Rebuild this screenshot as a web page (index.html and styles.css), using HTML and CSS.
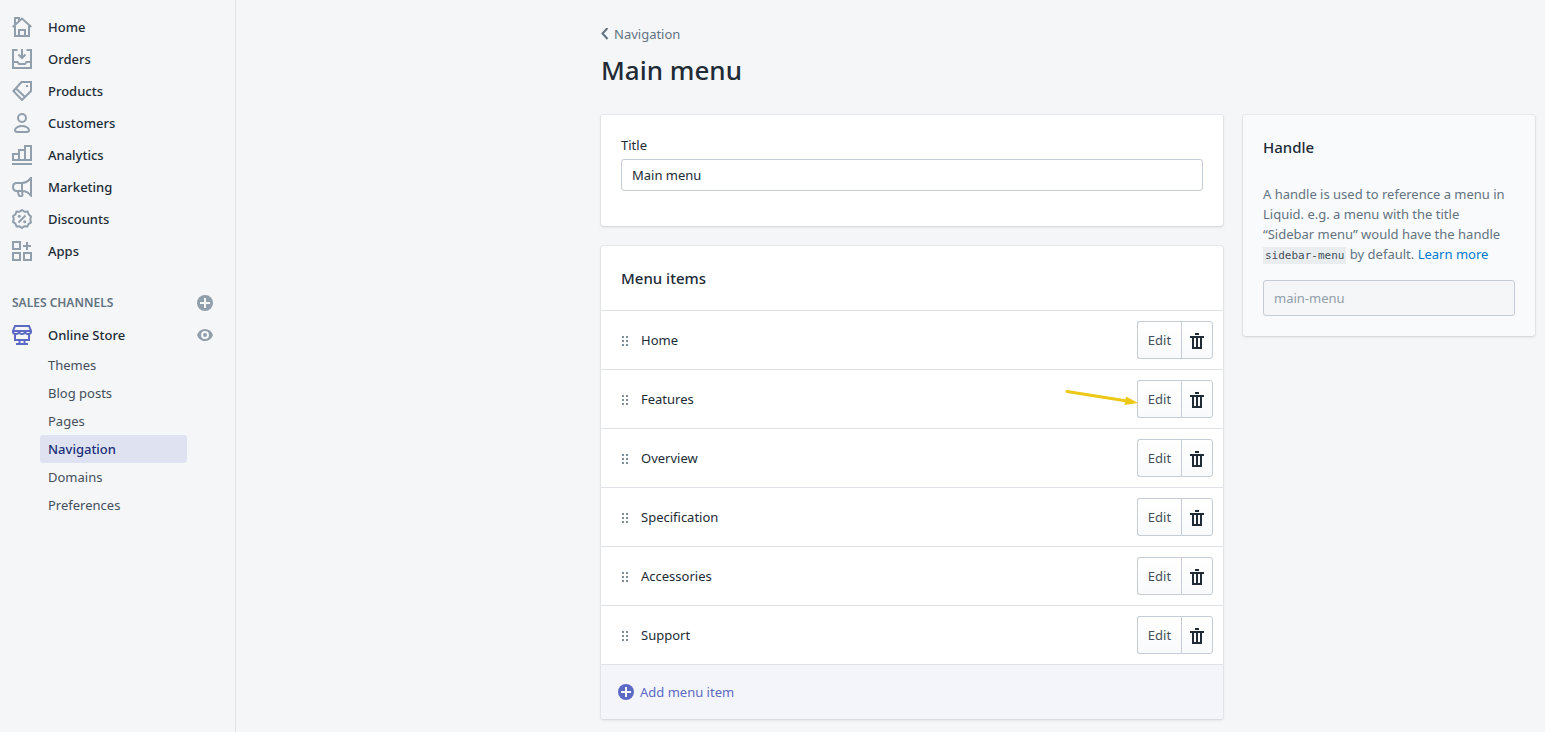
FILE: index.html
```html
<!DOCTYPE html>
<html lang="en">
<head>
<meta charset="utf-8">
<title>Main menu</title>
<link rel="stylesheet" href="styles.css">
</head>
<body>
<svg class="sprite" aria-hidden="true">
  <symbol id="i-home" viewBox="0 0 20 20"><path d="M3 9v10h14V9M7 19v-6h6v6M.7 10 10 1.500l9.300 8.500M3 8V1h4v3"/></symbol>
  <symbol id="i-orders" viewBox="0 0 20 20"><path d="M5.500 1H1v18h18V1h-4.500M1 13h4.500l1.500 2h6l1.500-2H19M10 0v9M6.500 5.500 10 9l3.500-3.500"/></symbol>
  <symbol id="i-products" viewBox="0 0 20 20"><path d="M9.500 1H19v9l-9 9-8.600-9zM4 7.500l9 8.500"/><path class="solid" d="M14 4h2v2h-2z"/></symbol>
  <symbol id="i-customers" viewBox="0 0 20 20"><circle cx="10" cy="5" r="4"/><path d="M5.500 19h9q2.500 0 2.500-2c0-2.500-4-4-7-4s-7 1.500-7 4q0 2 2.500 2z"/></symbol>
  <symbol id="i-analytics" viewBox="0 0 20 20"><path d="M1 15V9h6v6zM7 15V5h6v10zM13 15V1h6v14zM0 19h20"/></symbol>
  <symbol id="i-marketing" viewBox="0 0 20 20"><path d="M19 0v18.500c-2.500-3-5-4.500-9-4.500H5C2.500 14 1 12.500 1 10S2.500 6 5 6h5c4 0 6.500-2 9-5zM10 6v8M5.500 14 7 18.500q.5.800 1.800.8t1.700-1.300L10 14"/></symbol>
  <symbol id="i-discounts" viewBox="0 0 20 20"><path d="M10 1 12.600 2.800 15.600 2.600 16.700 5.500 19 7.500 18.300 10.500 19 13.500 16.700 14.800 15.300 17.400 12.300 17.300 10 19 7.500 17.300 4.600 17.400 3.400 14.700 1 13 1.800 10 1 7.200 3.400 5.300 4.500 2.600 7.500 2.800zM13.500 6.500l-7 7"/><circle class="solid" cx="7.300" cy="7.300" r="1.500"/><circle class="solid" cx="12.700" cy="12.700" r="1.500"/></symbol>
  <symbol id="i-apps" viewBox="0 0 20 20"><path d="M1 1h7v7H1zM1 12h7v7H1zM12 12h7v7h-7zM15 1v8M11 5h8"/></symbol>
  <symbol id="i-store" viewBox="0 0 20 20"><path d="M3 1h14l2 5v1q0 2-3 2-2.500 0-3-2-.500 2-3 2T7 7q-.500 2-3 2-3 0-3-2V6zM1 6h18M3 9v6h14V9M7.500 15v4M12.500 15v4M4 19h12"/></symbol>
  <symbol id="i-plus" viewBox="0 0 16 16"><circle class="solid" cx="8" cy="8" r="8"/><path class="cut" d="M8 3v10M3 8h10"/></symbol>
  <symbol id="i-eye" viewBox="0 0 16 16"><path class="solid" d="M0 8c1.500-4 4.500-6 8-6s6.500 2 8 6c-1.500 4-4.500 6-8 6S1.500 12 0 8z"/><circle class="cut" cx="8" cy="8" r="3"/></symbol>
  <symbol id="i-grip" viewBox="0 0 8 12"><path class="solid" d="M1 2h2v2H1zM5 2h2v2H5zM1 6h2v2H1zM5 6h2v2H5zM1 10h2v2H1zM5 10h2v2H5z"/></symbol>
  <symbol id="i-trash" viewBox="0 0 14 18"><path class="solid" fill-rule="evenodd" d="M5 2h4v2H5zM0 5h14v2h-2v11H2V7H0zM4 7v9h2V7zM8 7v9h2V7z"/></symbol>
</svg>
<div class="app">
  <nav class="sidebar">
    <ul class="nav">
      <li><a class="nav-link" href="#"><svg class="icon"><use href="#i-home"/></svg>Home</a></li>
      <li><a class="nav-link" href="#"><svg class="icon"><use href="#i-orders"/></svg>Orders</a></li>
      <li><a class="nav-link" href="#"><svg class="icon"><use href="#i-products"/></svg>Products</a></li>
      <li><a class="nav-link" href="#"><svg class="icon"><use href="#i-customers"/></svg>Customers</a></li>
      <li><a class="nav-link" href="#"><svg class="icon"><use href="#i-analytics"/></svg>Analytics</a></li>
      <li><a class="nav-link" href="#"><svg class="icon"><use href="#i-marketing"/></svg>Marketing</a></li>
      <li><a class="nav-link" href="#"><svg class="icon"><use href="#i-discounts"/></svg>Discounts</a></li>
      <li><a class="nav-link" href="#"><svg class="icon"><use href="#i-apps"/></svg>Apps</a></li>
    </ul>
    <div class="channels">
      <h2 class="channels-title">SALES CHANNELS</h2>
      <button class="icon-button" type="button" aria-label="Add sales channel"><svg class="icon-small"><use href="#i-plus"/></svg></button>
    </div>
    <div class="channels">
      <a class="nav-link store" href="#"><svg class="icon"><use href="#i-store"/></svg>Online Store</a>
      <button class="icon-button" type="button" aria-label="View your online store"><svg class="icon-small"><use href="#i-eye"/></svg></button>
    </div>
    <ul class="subnav">
      <li><a class="sub-link" href="#">Themes</a></li>
      <li><a class="sub-link" href="#">Blog posts</a></li>
      <li><a class="sub-link" href="#">Pages</a></li>
      <li><a class="sub-link active" href="#" aria-current="page">Navigation</a></li>
      <li><a class="sub-link" href="#">Domains</a></li>
      <li><a class="sub-link" href="#">Preferences</a></li>
    </ul>
  </nav>
  <main class="main">
    <div class="primary">
      <header class="page-header">
        <a class="back" href="#"><svg class="chevron" viewBox="0 0 8 12"><path d="M6.500 0 1.500 5.500l5 5.500"/></svg>Navigation</a>
        <h1 class="page-title">Main menu</h1>
      </header>
      <section class="card title-card">
        <label class="label" for="title">Title</label>
        <input class="field" id="title" type="text" value="Main menu">
      </section>
      <section class="card">
        <h2 class="card-title items-title">Menu items</h2>
        <ul class="items">
          <li class="item"><svg class="grip"><use href="#i-grip"/></svg><span class="item-name">Home</span><div class="actions"><button class="edit" type="button">Edit</button><button class="trash" type="button" aria-label="Delete Home"><svg><use href="#i-trash"/></svg></button></div></li>
          <li class="item"><svg class="grip"><use href="#i-grip"/></svg><span class="item-name">Features</span><svg class="arrow" viewBox="0 0 74 18"><path d="M3 4.500 63 14" /><path class="head" d="M62 9.500 74 16 60.500 18z"/></svg><div class="actions"><button class="edit" type="button">Edit</button><button class="trash" type="button" aria-label="Delete Features"><svg><use href="#i-trash"/></svg></button></div></li>
          <li class="item"><svg class="grip"><use href="#i-grip"/></svg><span class="item-name">Overview</span><div class="actions"><button class="edit" type="button">Edit</button><button class="trash" type="button" aria-label="Delete Overview"><svg><use href="#i-trash"/></svg></button></div></li>
          <li class="item"><svg class="grip"><use href="#i-grip"/></svg><span class="item-name">Specification</span><div class="actions"><button class="edit" type="button">Edit</button><button class="trash" type="button" aria-label="Delete Specification"><svg><use href="#i-trash"/></svg></button></div></li>
          <li class="item"><svg class="grip"><use href="#i-grip"/></svg><span class="item-name">Accessories</span><div class="actions"><button class="edit" type="button">Edit</button><button class="trash" type="button" aria-label="Delete Accessories"><svg><use href="#i-trash"/></svg></button></div></li>
          <li class="item"><svg class="grip"><use href="#i-grip"/></svg><span class="item-name">Support</span><div class="actions"><button class="edit" type="button">Edit</button><button class="trash" type="button" aria-label="Delete Support"><svg><use href="#i-trash"/></svg></button></div></li>
        </ul>
        <button class="add" type="button"><svg class="icon-small"><use href="#i-plus"/></svg>Add menu item</button>
      </section>
    </div>
    <aside class="card handle">
      <h2 class="card-title" id="handle-title">Handle</h2>
      <p class="handle-text">A handle is used to reference a menu in Liquid. e.g. a menu with the title “Sidebar menu” would have the handle <code>sidebar-menu</code> by default. <a class="learn" href="#">Learn more</a></p>
      <input class="field handle-field" type="text" value="main-menu" aria-labelledby="handle-title" disabled>
    </aside>
  </main>
</div>
</body>
</html>
```
FILE: styles.css
```css
* { box-sizing: border-box; }
body {
  margin: 0;
  background: #f4f6f8;
  color: #212b36;
  font: 14px/20px "Noto Sans", sans-serif;
}
ul, h1, h2, p { margin: 0; padding: 0; }
ul { list-style: none; }
a { text-decoration: none; }
button, input { font: inherit; }
button { cursor: pointer; }
svg { display: block; flex: none; }
.sprite { position: absolute; width: 0; height: 0; }
symbol { fill: none; stroke: currentColor; stroke-width: 2; }
.solid { fill: currentColor; stroke: none; }
.cut { fill: none; stroke: #f4f6f8; stroke-width: 2; }

.app { display: flex; min-height: 100vh; }
.sidebar {
  flex: none;
  width: 236px;
  padding: 11px 20px 0 12px;
  border-right: 1px solid #dfe3e8;
}
.nav { margin-bottom: 20px; }
.nav-link {
  display: flex;
  align-items: center;
  gap: 16px;
  height: 32px;
  color: #212b36;
  font-size: 13px;
  font-weight: 500;
}
.icon { width: 20px; height: 20px; color: #919eab; }
.store .icon { color: #5c6ac4; }
.channels {
  display: flex;
  align-items: center;
  justify-content: space-between;
  height: 32px;
}
.channels-title { color: #637381; font-size: 12px; font-weight: 600; }
.icon-button {
  padding: 0;
  margin-right: 2px;
  border: 0;
  background: none;
  color: #919eab;
}
.icon-small { width: 16px; height: 16px; }
.subnav { padding: 0 28px; }
.sub-link {
  display: block;
  padding: 4px 8px;
  border-radius: 3px;
  color: #454f5b;
  font-size: 13px;
}
.sub-link.active { background: #dfe3f1; color: #202e78; font-weight: 500; }

.main {
  flex: 1;
  display: grid;
  grid-template-columns: 622fr 292fr;
  gap: 20px;
  align-items: start;
  padding: 24px 10px 0 365px;
}
.page-header { padding-bottom: 29px; }
.back {
  display: flex;
  align-items: center;
  gap: 5px;
  width: fit-content;
  color: #637381;
  font-size: 13px;
}
.chevron { width: 8px; height: 12px; fill: none; stroke: #637381; stroke-width: 2; }
.page-title { font-size: 26px; font-weight: 500; line-height: 32px; margin-top: 10px; }
.card {
  border-radius: 3px;
  background: #fff;
  box-shadow: 0 0 0 1px rgba(63, 63, 68, .05), 0 1px 3px rgba(63, 63, 68, .15);
}
.title-card { margin-bottom: 20px; padding: 20px 20px 35px; }
.label { display: block; margin-bottom: 4px; font-size: 13px; }
.field {
  display: block;
  width: 100%;
  height: 32px;
  padding: 0 10px;
  border: 1px solid #c4cdd5;
  border-radius: 3px;
  background: #fff;
  color: #212b36;
  font-size: 13px;
}
.card-title { font-size: 15px; font-weight: 500; line-height: 24px; }
.items-title { padding: 20px; }
.item {
  position: relative;
  display: flex;
  align-items: center;
  gap: 12px;
  padding: 10px 10px 10px 20px;
  border-top: 1px solid #dfe3e8;
  font-size: 13px;
}
.grip { width: 8px; height: 12px; color: #7f8c99; }
.item-name { flex: 1; }
.actions { display: flex; }
.edit, .trash {
  height: 38px;
  padding: 0;
  border: 1px solid #c4cdd5;
  background: linear-gradient(#fff, #f9fafb);
}
.edit { width: 44px; border-right: 0; border-radius: 3px 0 0 3px; color: #454f5b; }
.trash {
  display: grid;
  place-items: center;
  width: 32px;
  border-radius: 0 3px 3px 0;
  color: #212b36;
}
.trash svg { width: 14px; height: 18px; }
.arrow {
  position: absolute;
  right: 85px;
  top: 17px;
  width: 74px;
  height: 18px;
  fill: none;
  stroke: #edc817;
  stroke-width: 3;
  stroke-linecap: round;
}
.arrow .head { fill: #edc817; stroke: none; }
.add {
  display: flex;
  align-items: center;
  gap: 6px;
  width: 100%;
  height: 55px;
  padding: 0 17px;
  border: 0;
  border-top: 1px solid #dfe3e8;
  border-radius: 0 0 3px 3px;
  background: #f4f5fa;
  color: #5c6ac4;
  font-size: 13px;
}
.handle { margin-top: 91px; padding: 20px; background: #f9fafb; }
.handle-text { margin: 25px 0 16px; padding-right: 4px; color: #637381; font-size: 13px; }
code {
  padding: 2px;
  background: #e9edf0;
  color: #454f5b;
  font: 11px/16px "DejaVu Sans Mono", monospace;
  white-space: nowrap;
}
.learn { color: #007ace; }
.handle-field { height: 36px; background: #f4f6f8; color: #919eab; }
```
